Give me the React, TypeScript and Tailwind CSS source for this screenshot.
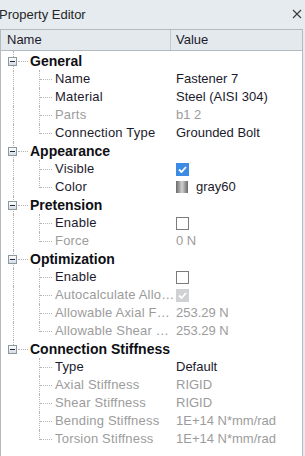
import React from 'react';

type Item = {
  name: string;
  value?: string;
  disabled?: boolean;
  kind?: 'text' | 'check' | 'color';
  checked?: boolean;
};

type Group = { title: string; items: Item[] };

const groups: Group[] = [
  {
    title: 'General',
    items: [
      { name: 'Name', value: 'Fastener 7' },
      { name: 'Material', value: 'Steel (AISI 304)' },
      { name: 'Parts', value: 'b1 2', disabled: true },
      { name: 'Connection Type', value: 'Grounded Bolt' },
    ],
  },
  {
    title: 'Appearance',
    items: [
      { name: 'Visible', kind: 'check', checked: true },
      { name: 'Color', kind: 'color', value: 'gray60' },
    ],
  },
  {
    title: 'Pretension',
    items: [
      { name: 'Enable', kind: 'check' },
      { name: 'Force', value: '0 N', disabled: true },
    ],
  },
  {
    title: 'Optimization',
    items: [
      { name: 'Enable', kind: 'check' },
      // names already shortened the way the column shows them
      { name: 'Autocalculate Allo…', kind: 'check', checked: true, disabled: true },
      { name: 'Allowable Axial F…', value: '253.29 N', disabled: true },
      { name: 'Allowable Shear …', value: '253.29 N', disabled: true },
    ],
  },
  {
    title: 'Connection Stiffness',
    items: [
      { name: 'Type', value: 'Default' },
      { name: 'Axial Stiffness', value: 'RIGID', disabled: true },
      { name: 'Shear Stiffness', value: 'RIGID', disabled: true },
      { name: 'Bending Stiffness', value: '1E+14 N*mm/rad', disabled: true },
      { name: 'Torsion Stiffness', value: '1E+14 N*mm/rad', disabled: true },
    ],
  },
];

function Expander() {
  return (
    <span className="relative z-10 flex h-[9px] w-[9px] items-center justify-center border border-[#8d979e] bg-gradient-to-b from-white to-[#d3dbe2]">
      <span className="h-px w-[5px] bg-[#1c2a44]" />
    </span>
  );
}

function CheckBox({ checked, disabled }: { checked?: boolean; disabled?: boolean }) {
  if (checked) {
    return (
      <span
        className={`flex h-[13px] w-[13px] items-center justify-center ${
          disabled ? 'bg-[#cfd1d3]' : 'bg-[#3c8be4]'
        }`}
      >
        <svg width="9" height="7" viewBox="0 0 9 7">
          <path d="M1 3.5 L3.5 6 L8 1" stroke="white" strokeWidth="1.8" fill="none" />
        </svg>
      </span>
    );
  }
  return <span className="h-[13px] w-[13px] border border-[#7b7b7b] bg-white" />;
}

function ValueCell({ item }: { item: Item }) {
  const color = item.disabled ? 'text-[#9c9c9c]' : 'text-[#1b1a2c]';
  if (item.kind === 'check') return <CheckBox checked={item.checked} disabled={item.disabled} />;
  if (item.kind === 'color') {
    return (
      <span className="flex items-center gap-[8px]">
        <span className="h-[12px] w-[12px] bg-gradient-to-r from-[#6a6a6a] via-[#d2d2d2] to-[#6a6a6a]" />
        <span className={color}>{item.value}</span>
      </span>
    );
  }
  return <span className={color}>{item.value}</span>;
}

export default function App() {
  return (
    <div
      className="flex h-[456px] w-[305px] flex-col overflow-hidden bg-[#e5ebee] text-[13px] text-[#1b1a2c]"
      style={{ fontFamily: '"Liberation Sans", Arial, sans-serif' }}
    >
      <div className="flex h-[29px] shrink-0 items-center justify-between pr-[3px]">
        <span className="-ml-px text-[#262626]">Property Editor</span>
        <svg width="10" height="10" viewBox="0 0 10 10" className="mb-[2px]">
          <path d="M1 1 L9 9 M9 1 L1 9" stroke="#3a3a3a" strokeWidth="1.1" />
        </svg>
      </div>

      <div className="flex w-[303px] flex-1 flex-col border-x border-t border-[#b3bbc0]">
        <div className="flex h-[21px] shrink-0 border-b border-[#b3bbc0] bg-[#e3e9ec]">
          <div className="flex w-[170px] items-center border-r border-[#c3cacf] pl-[6px]">Name</div>
          <div className="flex items-center pl-[5px]">Value</div>
        </div>

        <div className="flex-1 bg-white pt-px">
          {groups.map((g, gi) => {
            const lastGroup = gi === groups.length - 1;
            return (
              <div key={g.title}>
                <div className="relative flex h-[18px] items-center">
                  <span
                    className={`absolute left-[12px] w-0 border-l border-dotted border-[#b4b4b4] ${
                      gi === 0 ? 'top-[-1px]' : 'top-0'
                    } ${lastGroup ? 'h-[9px]' : 'h-[18px]'}`}
                  />
                  <span className="absolute left-[17px] top-[9px] w-[10px] border-t border-dotted border-[#b4b4b4]" />
                  <span className="ml-[7px]">
                    <Expander />
                  </span>
                  <span className="ml-[13px] whitespace-nowrap text-[14px] font-bold text-[#0f0f14]">
                    {g.title}
                  </span>
                </div>
                {g.items.map((it, ii) => {
                  const lastItem = ii === g.items.length - 1;
                  return (
                    <div key={it.name} className="relative flex h-[18px] items-center">
                      {!lastGroup && (
                        <span className="absolute left-[12px] top-0 h-[18px] w-0 border-l border-dotted border-[#b4b4b4]" />
                      )}
                      <span
                        className={`absolute left-[38px] top-0 w-0 border-l border-dotted border-[#b4b4b4] ${
                          lastItem ? 'h-[10px]' : 'h-[18px]'
                        }`}
                      />
                      <span className="absolute left-[39px] top-[9px] w-[12px] border-t border-dotted border-[#b4b4b4]" />
                      <span
                        className={`ml-[54px] w-[116px] whitespace-nowrap tracking-[0.2px] ${
                          it.disabled ? 'text-[#9c9c9c]' : 'text-[#1b1a2c]'
                        }`}
                      >
                        {it.name}
                      </span>
                      <span className="ml-[5px] flex items-center">
                        <ValueCell item={it} />
                      </span>
                    </div>
                  );
                })}
              </div>
            );
          })}
        </div>
      </div>
    </div>
  );
}
